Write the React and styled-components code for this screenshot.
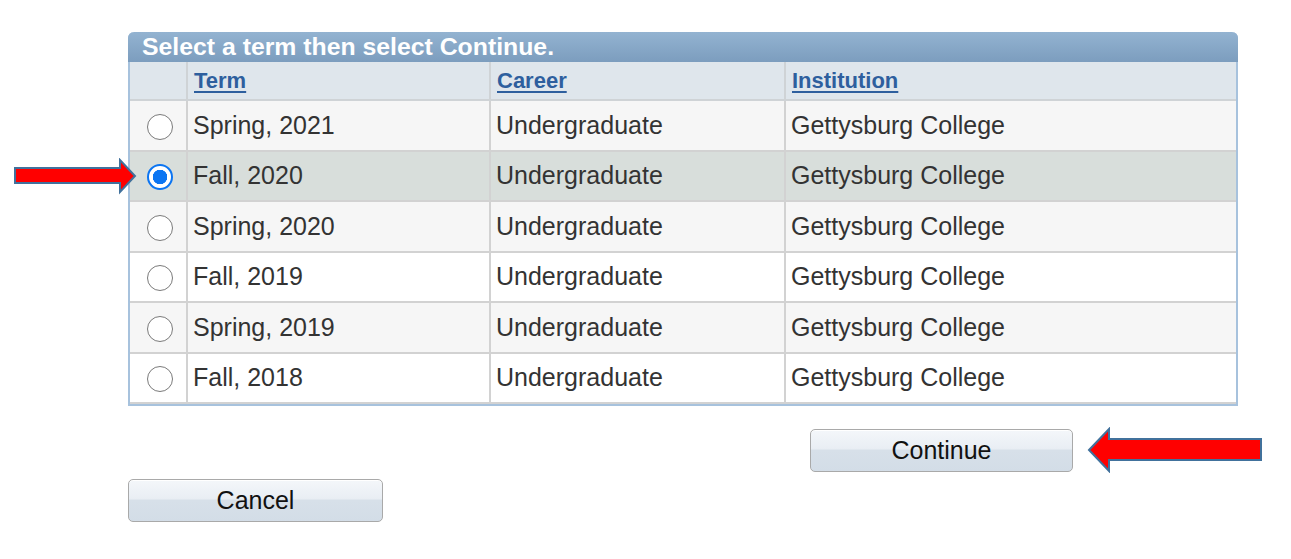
import React, { useState } from 'react';
import styled, { createGlobalStyle } from 'styled-components';

const GlobalStyle = createGlobalStyle`
  html, body {
    margin: 0;
    padding: 0;
    background: #ffffff;
  }
  body {
    font-family: "Liberation Sans", Arial, sans-serif;
  }
`;

const Page = styled.div`
  width: 1291px;
  height: 559px;
  padding: 32px 0 0 128px;
  box-sizing: border-box;
  display: flex;
  flex-direction: column;
`;

const Panel = styled.div`
  position: relative;
  width: 1110px;
  border: 2px solid #a7c2dd;
  border-top: none;
  border-radius: 6px 6px 0 0;
  box-sizing: border-box;
`;

const TitleBar = styled.div`
  height: 30px;
  margin: 0 -2px;
  padding-left: 14px;
  border-radius: 6px 6px 0 0;
  background: linear-gradient(#93b3d1, #7c9dbe);
  color: #ffffff;
  font-weight: bold;
  font-size: 24.8px;
  line-height: 30px;
  white-space: nowrap;
`;

const Table = styled.table`
  width: 100%;
  border-collapse: collapse;
  table-layout: fixed;
`;

const HeadCell = styled.th`
  height: 38px;
  padding: 0 0 0 6px;
  background: #dfe6ec;
  border: 2px solid #cfd3d6;
  border-top: none;
  text-align: left;
  font-size: 22px;
  font-weight: bold;
  box-sizing: border-box;
  &:first-child { border-left: none; }
  &:last-child { border-right: none; }
`;

const SortLink = styled.a`
  color: #2e5f9e;
  text-decoration: underline;
  text-underline-offset: 3px;
  cursor: pointer;
`;

const Row = styled.tr`
  height: 50.5px;
  background: ${({ $selected, $shade }) =>
    $selected ? '#d8dedb' : $shade ? '#f6f6f6' : '#ffffff'};
`;

const Cell = styled.td`
  padding: 0 0 0 5px;
  border: 2px solid #d2d2d2;
  font-size: 25px;
  color: #333333;
  white-space: nowrap;
  &:first-child { border-left: none; }
  &:last-child { border-right: none; }
`;

const RadioCell = styled(Cell)`
  padding: 0;
  text-align: center;
`;

const Radio = styled.span`
  display: inline-block;
  width: 26px;
  height: 26px;
  border-radius: 50%;
  box-sizing: border-box;
  vertical-align: middle;
  cursor: pointer;
  border: ${({ $on }) => ($on ? '2px solid #0b75f2' : '1.5px solid #7a7a7a')};
  background: ${({ $on }) =>
    $on ? 'radial-gradient(circle, #0b75f2 0 7px, #ffffff 7.5px)' : '#ffffff'};
  margin-left: 3px;
`;

const ArrowMark = styled.svg`
  position: absolute;
  left: -116px;
  top: 126px;
  pointer-events: none;
`;

const ContinueRow = styled.div`
  display: flex;
  align-items: center;
  gap: 14px;
  margin: 21px 0 0 682px;
`;

const Button = styled.button`
  width: ${({ $w }) => $w}px;
  height: 43px;
  border: 1px solid #a9a9a9;
  border-radius: 5px;
  background: linear-gradient(#f4f7fa 0%, #e9eef4 45%, #d7e0e9 50%, #d3dde7 100%);
  box-shadow: inset 0 1px 0 #ffffff;
  font-family: "Liberation Sans", Arial, sans-serif;
  font-size: 25px;
  color: #111111;
  cursor: pointer;
`;

const CancelRow = styled.div`
  display: flex;
  margin-top: 6px;
`;

const terms = [
  'Spring, 2021',
  'Fall, 2020',
  'Spring, 2020',
  'Fall, 2019',
  'Spring, 2019',
  'Fall, 2018',
];

const App = () => {
  const [selected, setSelected] = useState(1);

  return (
    <Page>
      <GlobalStyle />
      <Panel>
        <TitleBar>Select a term then select Continue.</TitleBar>
        <Table>
          <colgroup>
            <col style={{ width: '57px' }} />
            <col style={{ width: '303px' }} />
            <col style={{ width: '295px' }} />
            <col />
          </colgroup>
          <thead>
            <tr>
              <HeadCell />
              <HeadCell><SortLink>Term</SortLink></HeadCell>
              <HeadCell><SortLink>Career</SortLink></HeadCell>
              <HeadCell><SortLink>Institution</SortLink></HeadCell>
            </tr>
          </thead>
          <tbody>
            {terms.map((t, i) => (
              <Row key={t} $selected={i === selected} $shade={i % 2 === 0}>
                <RadioCell>
                  <Radio $on={i === selected} onClick={() => setSelected(i)} />
                </RadioCell>
                <Cell>{t}</Cell>
                <Cell>Undergraduate</Cell>
                <Cell>Gettysburg College</Cell>
              </Row>
            ))}
          </tbody>
        </Table>
        <ArrowMark width="124" height="38" viewBox="0 0 124 38">
          <path
            d="M1 10 H106 V2 L121 18 L106 34 V25 H1 Z"
            fill="#ff0000"
            stroke="#41719c"
            strokeWidth="2"
            strokeLinejoin="miter"
          />
        </ArrowMark>
      </Panel>

      <ContinueRow>
        <Button $w={263}>Continue</Button>
        <svg width="176" height="46" viewBox="0 0 176 46">
          <path
            d="M2 23 L22 2 V12 H174 V33 H22 V44 Z"
            fill="#ff0000"
            stroke="#41719c"
            strokeWidth="2"
          />
        </svg>
      </ContinueRow>

      <CancelRow>
        <Button $w={255}>Cancel</Button>
      </CancelRow>
    </Page>
  );
};

export default App;
